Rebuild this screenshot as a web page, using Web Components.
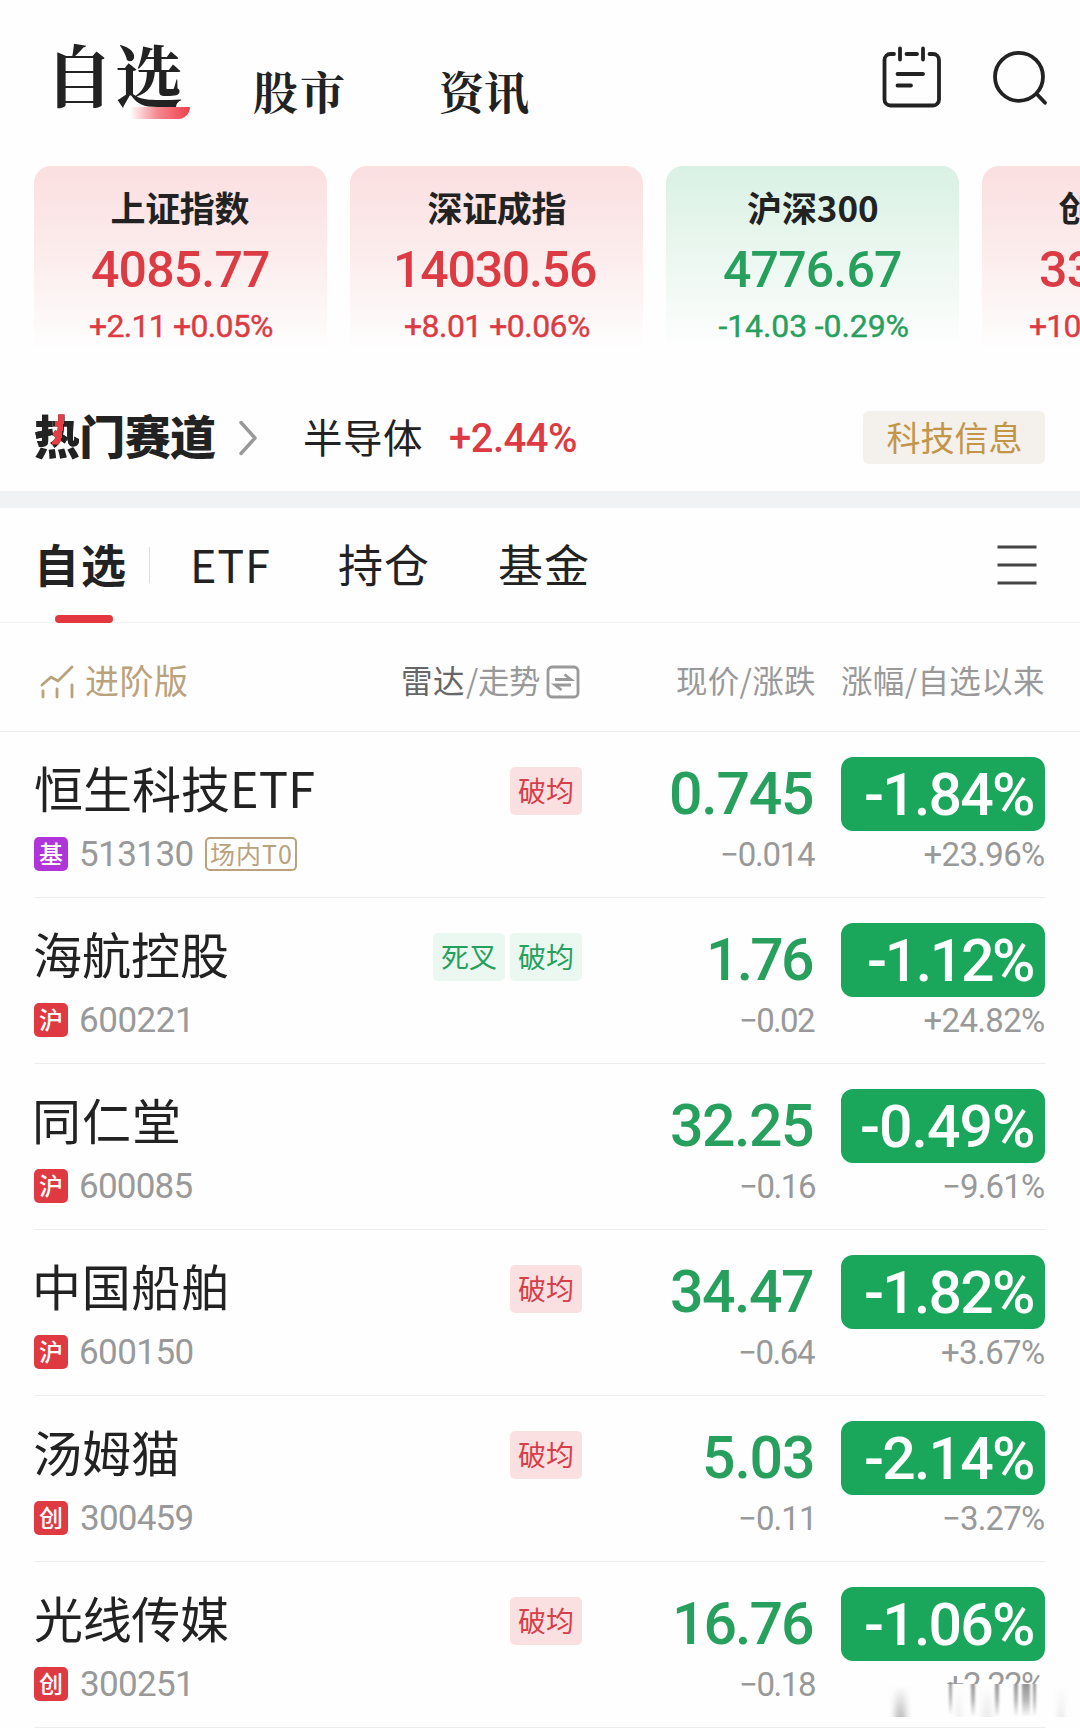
<!DOCTYPE html>
<html lang="zh-CN">
<head>
<meta charset="utf-8">
<title>自选</title>
<style>
    body {
        margin: 0;
        width: 1080px;
        height: 1728px;
        overflow: hidden;
        background: #fefefe;
        color: #222;
        font-family: "Noto Sans CJK SC", sans-serif;
        --red: #dc3b43;
        --green: #27a05d;
        --digits: Roboto, "Noto Sans CJK SC", sans-serif;
    }
</style>
</head>
<body>
<stock-app></stock-app>

<script>
const define = (name, html, setup) => {
    const template = document.createElement("template")
    template.innerHTML = html
    customElements.define(name, class extends HTMLElement {
        constructor() {
            super()
            this.attachShadow({ mode: "open" })
            this.shadowRoot.appendChild(template.content.cloneNode(true))
        }
        connectedCallback() {
            if (setup) setup(this, this.shadowRoot)
        }
    })
}

// text whose inked width is exactly w pixels, spread by letter spacing
const ruler = document.createElement("canvas").getContext("2d")
define("fit-text", `
<style>
    :host { display: block; flex: none; white-space: nowrap; line-height: 1; }
    span { display: block; }
</style>
<span><slot></slot></span>
`, (host, root) => {
    const text = host.textContent
    const width = Number(host.getAttribute("w"))
    const style = getComputedStyle(host)
    ruler.font = `${style.fontWeight} ${style.fontSize} ${style.fontFamily}`
    const box = ruler.measureText(text)
    const ink = box.actualBoundingBoxLeft + box.actualBoundingBoxRight
    const span = root.querySelector("span")
    host.style.width = width + "px"
    span.style.marginLeft = box.actualBoundingBoxLeft + "px"
    span.style.letterSpacing = (width - ink) / (text.length - 1) + "px"
})

define("top-nav", `
<style>
    :host { display: flex; height: 165px; align-items: flex-start; }
    nav { display: flex; flex: 1; font-family: "Noto Serif CJK SC", "Source Han Serif SC", "Noto Sans CJK SC", serif; font-weight: 700; }
    fit-text { font-size: 45px; margin-top: 68px; }
    .current { position: relative; margin: 0 72px 0 57px; }
    .current fit-text { font-size: 68px; margin-top: 39px; }
    .current i {
        position: absolute; left: 73px; top: 107px; width: 60px; height: 12px;
        background: linear-gradient(90deg, #fff0, #f58a91 45%, #ee3f4b);
        border-radius: 0 0 14px 0;
    }
    .news { margin-left: 96px; }
    svg { margin-top: 40px; }
</style>
<nav>
    <div class="current"><i></i><fit-text w="125">自选</fit-text></div>
    <fit-text w="90">股市</fit-text>
    <fit-text w="89" class="news">资讯</fit-text>
</nav>
<svg width="200" height="75" fill="none" stroke="#222" stroke-width="3.800" stroke-linecap="round">
    <path d="M14 14H10.500a6 6 0 0 0-6 6v39.500a6 6 0 0 0 6 6h42.500a6 6 0 0 0 6-6V20a6 6 0 0 0-6-6H49.500M26.500 14H37M20 8.500v11M43 8.500v11M17.500 34H43M17.500 45.500H31"/>
    <circle cx="139" cy="36.800" r="24"/>
    <path d="M157 54.300l8 8.500"/>
</svg>
`)

define("index-card", `
<style>
    :host {
        display: flex; flex: none; flex-direction: column; align-items: center;
        width: 293px; height: 195px; border-radius: 17px;
        color: var(--red);
        background: linear-gradient(#fbdfe1, #fcecec 45%, #fefefe 95%);
    }
    :host([down]) {
        color: var(--green);
        background: linear-gradient(#d9f1e4, #ebf7f0 45%, #fefefe 95%);
    }
    .name { margin-top: 23px; font-size: 35px; font-weight: 700; color: #222; }
    .value { margin-top: 21px; font: 500 50px var(--digits); line-height: 1; }
    .change { margin: 15px 0 0 2px; font: 400 32px var(--digits); line-height: 1; -webkit-text-stroke: .4px; }
</style>
<fit-text class="name"></fit-text>
<fit-text class="value"></fit-text>
<fit-text class="change"></fit-text>
`)

const indexes = [
    ["上证指数", 138, "4085.77", 177, "+2.11 +0.05%", 183],
    ["深证成指", 138, "14030.56", 199, "+8.01 +0.06%", 185],
    ["沪深300", 131, "4776.67", 177, "-14.03 -0.29%", 190],
    ["创业板指", 140, "3318.89", 177, "+10.33 +0.31%", 199]
]

define("index-strip", `
<style>
    :host { display: flex; gap: 23px; height: 210px; padding-left: 34px; overflow: hidden; margin-top: 1px; }
</style>
`, (host, root) => {
    indexes.forEach(item => {
        const card = document.createElement("index-card")
        if (item[4][0] === "-") card.setAttribute("down", "")
        const parts = card.shadowRoot.querySelectorAll("fit-text")
        parts.forEach((part, i) => {
            part.textContent = item[i * 2]
            part.setAttribute("w", item[i * 2 + 1])
        })
        root.appendChild(card)
    })
})

define("hot-track", `
<style>
    :host { display: flex; align-items: center; height: 107px; padding: 8px 35px 0; border-bottom: 17px solid #f1f2f4; }
    .title { margin-top: -7px; font-size: 46px; font-weight: 900; }
    .title b {
        color: transparent;
        font-weight: 900;
        background: linear-gradient(98deg, #222 47%, #e63c46 47% 64%, #222 64%) 0 0 / 100% 66% no-repeat, #222;
        background-clip: text;
        -webkit-background-clip: text;
    }
    svg { margin: 0 47px 0 22px; }
    .sector { margin-top: -4px; font-size: 39.500px; }
    .rise { margin: 2px 0 0 28px; font: 500 40px var(--digits); line-height: 1; color: var(--red); }
    .tag {
        display: flex; align-items: center; justify-content: center;
        box-sizing: border-box; padding-bottom: 2px;
        margin-left: auto; width: 182px; height: 53px; border-radius: 6px;
        background: #f4f0eb; color: #c39548; font-size: 34px;
    }
</style>
<fit-text w="181" class="title"><b>热</b>门赛道</fit-text>
<svg width="20" height="38" fill="none" stroke="#999" stroke-width="3.400" stroke-linecap="round" stroke-linejoin="round"><path d="M3 3.500L17 19L3 34.500"/></svg>
<fit-text w="117" class="sector">半导体</fit-text>
<fit-text w="126" class="rise">+2.44%</fit-text>
<div class="tag"><fit-text w="135">科技信息</fit-text></div>
`)

define("group-tabs", `
<style>
    :host { display: flex; align-items: center; height: 114px; border-bottom: 1px solid #f0f0f1; font-size: 45px; }
    fit-text { position: relative; top: -2px; }
    .current { position: relative; margin-left: 39px; font-weight: 700; }
    .current fit-text { left: 1px; }
    .current i { position: absolute; left: 16px; bottom: -35px; width: 58px; height: 8px; border-radius: 4px; background: #e3363f; }
    .rule { width: 1px; height: 36px; margin: 0 44px 0 25px; background: #ddd; }
    svg { margin: 0 43px 0 auto; }
</style>
<div class="current"><fit-text w="85">自选</fit-text><i></i></div>
<div class="rule"></div>
<fit-text w="75">ETF</fit-text>
<fit-text w="89" style="margin-left: 70px">持仓</fit-text>
<fit-text w="89" style="margin-left: 71px">基金</fit-text>
<svg width="40" height="40" stroke="#444" stroke-width="3"><path d="M.5 2H39.500M.5 20H39.500M.5 38H39.500"/></svg>
`)

define("list-head", `
<style>
    :host { display: flex; align-items: center; box-sizing: border-box; height: 109px; padding-top: 5px; border-bottom: 1px solid #ebebed; color: #999; font-size: 31.500px; }
    .pro { display: flex; align-items: center; color: #b9a27c; font-size: 34px; margin-left: 40px; width: 363px; gap: 11px; }
    .radar { color: #666; }
    .swap { margin: 5px 0 0 6px; }
    .pro svg { margin-top: 5px; }
</style>
<div class="pro">
    <svg width="35" height="34" fill="none" stroke="#b9a27c" stroke-width="2.800" stroke-linecap="round" stroke-linejoin="round"><path d="M2 20L11 12L18 16L32 2M3 26v6M17 24v8M32 20v12"/></svg>
    <fit-text w="101">进阶版</fit-text>
</div>
<fit-text w="61" class="radar">雷达</fit-text>
<fit-text w="74" style="margin-left: 2px">/走势</fit-text>
<svg class="swap" width="34" height="34" fill="none" stroke="#999" stroke-width="2.800">
    <rect x="2" y="2" width="30" height="30" rx="4"/>
    <path d="M9 14.500H25L18.500 9.500M25 20H9L15.500 25"/>
</svg>
<fit-text w="138" style="margin-left: 97px">现价/涨跌</fit-text>
<fit-text w="202" style="margin-left: 27px">涨幅/自选以来</fit-text>
`)

define("signal-tag", `
<style>
    :host {
        display: flex; align-items: center; justify-content: center;
        box-sizing: border-box; padding-bottom: 3px; line-height: 1;
        width: 72px; height: 48px; border-radius: 5px;
        background: #fbe0e2; color: #d63f49; font-size: 28px;
    }
    :host([down]) { background: #ebf8f2; color: #27a05d; }
</style>
<slot></slot>
`)

define("stock-row", `
<style>
    :host { display: grid; grid-template-columns: 1fr auto 259px 204px; box-sizing: border-box; height: 166px; margin: 0 34px; padding: 25px 1px 0 0; border-bottom: 1px solid #eee; }
    .name { margin: 5px 0 0 1px; font-size: 49px; height: 75px; box-sizing: border-box; }
    .meta { display: flex; align-items: center; height: 34px; }
    .market { display: flex; align-items: center; justify-content: center; box-sizing: border-box; width: 34px; height: 34px; padding-bottom: 2px; border-radius: 5px; background: #df3a42; color: #fff; font-size: 24px; font-weight: 500; line-height: 1; }
    .market.fund { background: #af35d9; }
    .code { margin-left: 13px; font: 400 35px var(--digits); line-height: 1; color: #999; }
    .note { display: flex; align-items: center; justify-content: center; width: 92px; height: 34px; box-sizing: border-box; padding-bottom: 2px; margin-left: 12px; border: 2px solid #b9a27c; border-radius: 5px; color: #b9a27c; font-size: 25px; }
    .tags { display: flex; gap: 5px; padding-top: 10px; }
    .right { display: flex; flex-direction: column; align-items: flex-end; }
    .price { margin: 7px 28px 0 0; font: 500 59px var(--digits); line-height: 1; color: var(--green); height: 73px; }
    .badge { display: flex; align-items: center; justify-content: flex-end; box-sizing: border-box; width: 204px; height: 74px; padding-right: 12px; border-radius: 12px; background: #1aa65b; color: #fff; font: 500 59px var(--digits); line-height: 1; }
    .small { font: 400 33px var(--digits); line-height: 1; color: #999; }
    .since { margin-top: 7px; position: relative; margin-right: 1px; }
    .diff { margin: 1px 26px 0 0; }
    :host([smeared]) .since fit-text { height: 16px; overflow: hidden; }
    .smear { display: none; position: absolute; right: -26px; top: 10px; }
    :host([smeared]) .smear { display: block; }
</style>
<div>
    <fit-text class="name"></fit-text>
    <div class="meta"><span class="market"></span><fit-text class="code"></fit-text></div>
</div>
<div class="tags"></div>
<div class="right">
    <fit-text class="price"></fit-text>
    <fit-text class="small diff"></fit-text>
</div>
<div class="right">
    <div class="badge"><fit-text class="pct"></fit-text></div>
    <div class="small since">
        <fit-text class="total"></fit-text>
        <svg class="smear" width="190" height="42">
            <defs>
                <linearGradient id="fade" x1="0" y1="0" x2="0" y2="1"><stop offset="0" stop-color="#888" stop-opacity=".9"/><stop offset=".5" stop-color="#888" stop-opacity=".6"/><stop offset="1" stop-color="#888" stop-opacity=".05"/></linearGradient>
                <linearGradient id="grow" x1="0" y1="0" x2="0" y2="1"><stop offset="0" stop-color="#999" stop-opacity="0"/><stop offset="1" stop-color="#999" stop-opacity=".65"/></linearGradient>
                <filter id="soft" x="-1" width="3" y="0" height="1"><feGaussianBlur stdDeviation="1.200 0"/></filter>
                <filter id="haze" x="-1" width="3" y="0" height="1"><feGaussianBlur stdDeviation="3 0"/></filter>
            </defs>
            <g fill="url(#fade)" filter="url(#soft)">
                <rect x="69" y="4" width="3" height="32"/>
                <rect x="91" y="6" width="4" height="32"/>
                <rect x="115" y="6" width="4" height="32"/>
                <rect x="134" y="6" width="4" height="32"/>
                <rect x="142" y="6" width="8" height="32"/>
                <rect x="153" y="6" width="3" height="32"/>
            </g>
            <g fill="url(#grow)" filter="url(#haze)">
                <rect x="15" y="8" width="11" height="31"/>
                <rect x="77" y="8" width="4" height="31" opacity=".4"/>
                <rect x="102" y="8" width="10" height="31" opacity=".3"/>
                <rect x="179" y="8" width="4" height="31" opacity=".5"/>
            </g>
        </svg>
    </div>
</div>
`)

const stocks = [
    { name: ["恒生科技ETF", 279], market: "基", code: ["513130", 111.5], note: "场内T0", tags: ["破均"], price: ["0.745", 141], diff: ["−0.014", 93], pct: ["-1.84%", 167], total: ["+23.96%", 119.5] },
    { name: ["海航控股", 193], market: "沪", code: ["600221", 107], tags: ["死叉", "破均"], down: true, price: ["1.76", 103], diff: ["−0.02", 74], pct: ["-1.12%", 164], total: ["+24.82%", 119.5] },
    { name: ["同仁堂", 142], nudge: 2, market: "沪", code: ["600085", 111.5], tags: [], price: ["32.25", 141], diff: ["−0.16", 74], pct: ["-0.49%", 171], total: ["−9.61%", 100] },
    { name: ["中国船舶", 190], nudge: 2, market: "沪", code: ["600150", 111.5], tags: ["破均"], price: ["34.47", 141], diff: ["−0.64", 75], pct: ["-1.82%", 167], total: ["+3.67%", 102] },
    { name: ["汤姆猫", 143], market: "创", code: ["300459", 111.5], tags: ["破均"], price: ["5.03", 108], diff: ["−0.11", 71], nudgeDiff: 30, pct: ["-2.14%", 167], total: ["−3.27%", 100] },
    { name: ["光线传媒", 193], market: "创", code: ["300251", 107], tags: ["破均"], price: ["16.76", 137], diff: ["−0.18", 74], pct: ["-1.06%", 167], total: ["+2.22%", 97], smeared: true }
]

define("stock-list", `
<style>
    :host { display: block; }
</style>
`, (host, root) => {
    stocks.forEach(stock => {
        const row = document.createElement("stock-row")
        const find = selector => row.shadowRoot.querySelector(selector)
        for (const key of ["name", "code", "price", "diff", "pct", "total"]) {
            find("." + key).textContent = stock[key][0]
            find("." + key).setAttribute("w", stock[key][1])
        }
        if (stock.nudge) find(".name").style.marginLeft = stock.nudge + "px"
        if (stock.nudgeDiff) find(".diff").style.marginRight = stock.nudgeDiff + "px"
        find(".market").textContent = stock.market
        find(".market").classList.toggle("fund", stock.market === "基")
        if (stock.note) {
            find(".meta").insertAdjacentHTML("beforeend", `<span class="note"><fit-text w="81">${stock.note}</fit-text></span>`)
        }
        stock.tags.forEach(tag => {
            find(".tags").insertAdjacentHTML("beforeend", `<signal-tag ${stock.down ? "down" : ""}>${tag}</signal-tag>`)
        })
        if (stock.smeared) row.setAttribute("smeared", "")
        root.appendChild(row)
    })
})

define("stock-app", `
<style>
    :host { display: flex; flex-direction: column; width: 1080px; height: 1728px; overflow: hidden; }
    :host > * { flex: none; }
</style>
<top-nav></top-nav>
<index-strip></index-strip>
<hot-track></hot-track>
<group-tabs></group-tabs>
<list-head></list-head>
<stock-list></stock-list>
`)
</script>
</body>
</html>
